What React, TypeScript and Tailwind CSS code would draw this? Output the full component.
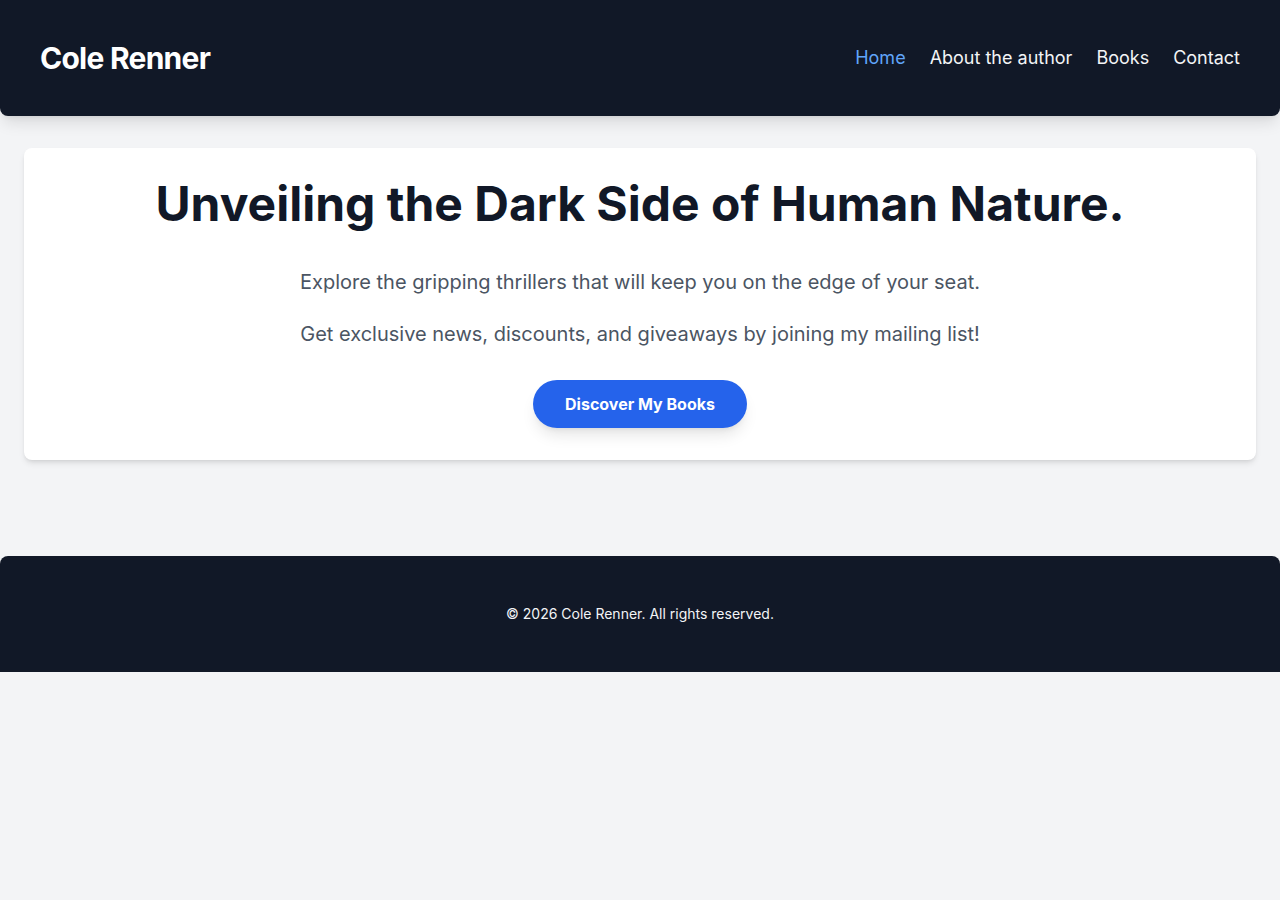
import React from 'react';

function Header() {
	return (
		<header className="flex items-center justify-between p-10 bg-[#111827] rounded-b-lg shadow-lg">
			<h1 className="text-3xl font-bold text-white tracking-tight">Cole Renner</h1>
			<nav className="flex items-center gap-6 text-lg">
				<a href="#" className="text-[#60a5fa]">Home</a>
				<a href="#" className="text-[#f3f4f6]">About the author</a>
				<a href="#" className="text-[#f3f4f6]">Books</a>
				<a href="#" className="text-[#f3f4f6]">Contact</a>
			</nav>
		</header>
	);
}

function Hero() {
	return (
		<section className="mx-6 mt-8 p-8 bg-white rounded-lg shadow-md text-center">
			<h2 className="text-5xl font-bold text-[#111827] mb-10">
				Unveiling the Dark Side of Human Nature.
			</h2>
			<p className="text-xl text-[#4b5563] mb-6">
				Explore the gripping thrillers that will keep you on the edge of your seat.
			</p>
			<p className="text-xl text-[#4b5563] mb-8">
				Get exclusive news, discounts, and giveaways by joining my mailing list!
			</p>
			<button className="px-8 py-3 bg-[#2563eb] text-white font-bold rounded-full shadow-lg">
				Discover My Books
			</button>
		</section>
	);
}

function Footer() {
	return (
		<footer className="mt-24 py-12 bg-[#111827] rounded-t-lg text-center">
			<p className="text-sm text-[#f3f4f6]">© 2026 Cole Renner. All rights reserved.</p>
		</footer>
	);
}

export default function App() {
	return (
		<div className="min-h-screen bg-[#f3f4f6] font-['Inter',sans-serif]">
			<Header />
			<Hero />
			<Footer />
		</div>
	);
}
